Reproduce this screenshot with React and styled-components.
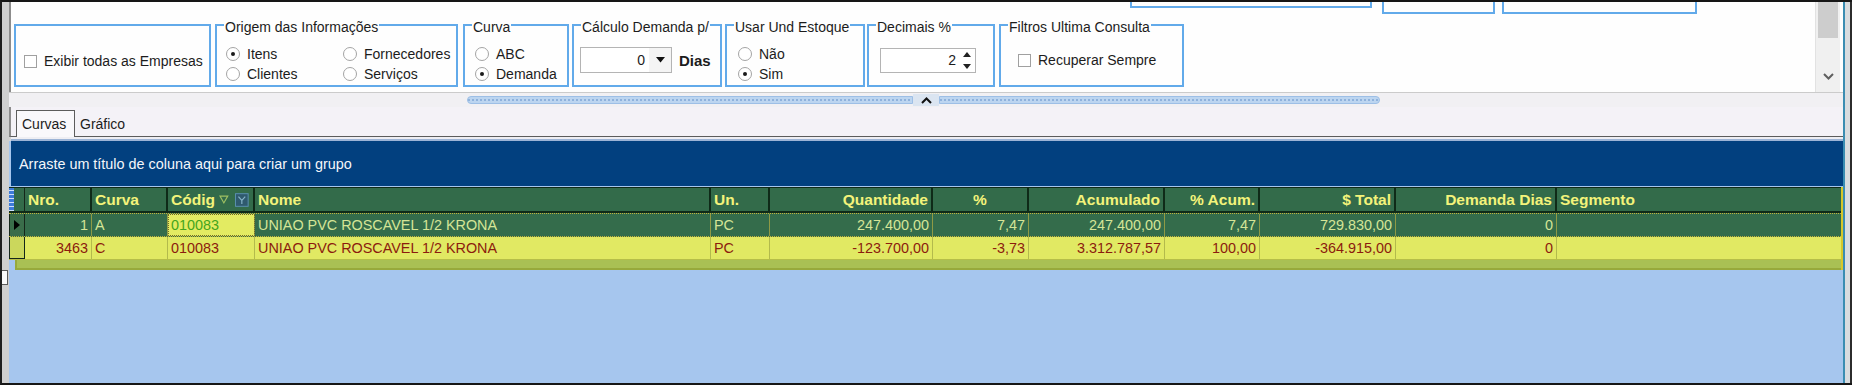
import React from 'react'
import styled, { createGlobalStyle } from 'styled-components'

const GlobalStyle = createGlobalStyle`
  html, body {
    margin: 0;
    padding: 0;
    background: #ffffff;
  }
  body {
    font-family: "Liberation Sans", Arial, sans-serif;
    font-size: 14px;
    color: #1a1a1a;
  }
`

const columns = [
  { key: 'nro', title: 'Nro.', w: 67, head: 'left', align: 'right' },
  { key: 'curva', title: 'Curva', w: 76, head: 'left', align: 'left' },
  { key: 'cod', title: 'Códig', w: 87, head: 'left', align: 'left', filter: true },
  { key: 'nome', title: 'Nome', w: 456, head: 'left', align: 'left' },
  { key: 'un', title: 'Un.', w: 59, head: 'left', align: 'left' },
  { key: 'qtd', title: 'Quantidade', w: 163, head: 'right', align: 'right' },
  { key: 'pct', title: '%', w: 96, head: 'center', align: 'right' },
  { key: 'acum', title: 'Acumulado', w: 136, head: 'right', align: 'right' },
  { key: 'pacum', title: '% Acum.', w: 95, head: 'right', align: 'right' },
  { key: 'total', title: '$ Total', w: 136, head: 'right', align: 'right' },
  { key: 'dem', title: 'Demanda Dias', w: 161, head: 'right', align: 'right' },
  { key: 'seg', title: 'Segmento', w: 0, head: 'left', align: 'left' },
]

const rows = [
  {
    nro: '1', curva: 'A', cod: '010083', nome: 'UNIAO PVC ROSCAVEL 1/2 KRONA', un: 'PC',
    qtd: '247.400,00', pct: '7,47', acum: '247.400,00', pacum: '7,47', total: '729.830,00', dem: '0', seg: '',
  },
  {
    nro: '3463', curva: 'C', cod: '010083', nome: 'UNIAO PVC ROSCAVEL 1/2 KRONA', un: 'PC',
    qtd: '-123.700,00', pct: '-3,73', acum: '3.312.787,57', pacum: '100,00', total: '-364.915,00', dem: '0', seg: '',
  },
]

function Radio({ checked, label }) {
  return (
    <Option>
      <RadioDot $checked={checked} />
      <span>{label}</span>
    </Option>
  )
}

function Check({ label }) {
  return (
    <Option>
      <CheckSquare />
      <span>{label}</span>
    </Option>
  )
}

function FilterIcons() {
  return (
    <svg width="32" height="16" viewBox="0 0 32 16">
      <path d="M1 4 L9 4 L5 11 Z" fill="none" stroke="#9fc063" strokeWidth="1.2" />
      <rect x="17" y="1.5" width="13" height="13" fill="#2f5a6e" stroke="#5a8fb0" strokeWidth="1" />
      <path d="M20 4.5 L23.5 8.5 L27 4.5 M23.5 8.5 L23.5 12" fill="none" stroke="#86b4c8" strokeWidth="1.2" />
    </svg>
  )
}

export default function App() {
  return (
    <>
      <GlobalStyle />
      <Frame>
        <LeftRail>
          <RailHandle />
        </LeftRail>
        <Main>
          <TopPanel>
            <PanelContent>
              <PeekRow>
                <PeekBox $w={242} $h={6} $ml={1116} />
                <PeekBox $w={113} $h={12} $ml={10} />
                <PeekBox $w={195} $h={12} $ml={7} />
              </PeekRow>
              <BoxRow>
                <GroupBox $w={197} $ml={0}>
                  <Body $pt={11} $pl={8}>
                    <Check label="Exibir todas as Empresas" />
                  </Body>
                </GroupBox>
                <GroupBox $w={243} $ml={4}>
                  <Legend>Origem das Informações</Legend>
                  <Body $pt={8} $pl={9}>
                    <OptionGrid $cols="117px 1fr">
                      <Radio checked label="Itens" />
                      <Radio label="Fornecedores" />
                      <Radio label="Clientes" />
                      <Radio label="Serviços" />
                    </OptionGrid>
                  </Body>
                </GroupBox>
                <GroupBox $w={106} $ml={5}>
                  <Legend>Curva</Legend>
                  <Body $pt={8} $pl={10}>
                    <OptionGrid $cols="1fr">
                      <Radio label="ABC" />
                      <Radio checked label="Demanda" />
                    </OptionGrid>
                  </Body>
                </GroupBox>
                <GroupBox $w={150} $ml={3}>
                  <Legend>Cálculo Demanda p/</Legend>
                  <Body $pt={0} $pl={6}>
                    <InlineRow>
                      <Combo>
                        <ComboValue>0</ComboValue>
                        <ComboArrow>
                          <svg width="9" height="6" viewBox="0 0 9 6">
                            <path d="M0 0 L9 0 L4.5 5.5 Z" fill="#111" />
                          </svg>
                        </ComboArrow>
                      </Combo>
                      <BoldLabel>Dias</BoldLabel>
                    </InlineRow>
                  </Body>
                </GroupBox>
                <GroupBox $w={140} $ml={3}>
                  <Legend>Usar Und Estoque</Legend>
                  <Body $pt={8} $pl={11}>
                    <OptionGrid $cols="1fr">
                      <Radio label="Não" />
                      <Radio checked label="Sim" />
                    </OptionGrid>
                  </Body>
                </GroupBox>
                <GroupBox $w={128} $ml={2}>
                  <Legend>Decimais %</Legend>
                  <Body $pt={0} $pl={11}>
                    <Spin>
                      <ComboValue>2</ComboValue>
                      <SpinArrows>
                        <svg width="8" height="5" viewBox="0 0 8 5">
                          <path d="M0 5 L8 5 L4 0 Z" fill="#222" />
                        </svg>
                        <svg width="8" height="5" viewBox="0 0 8 5">
                          <path d="M0 0 L8 0 L4 5 Z" fill="#222" />
                        </svg>
                      </SpinArrows>
                    </Spin>
                  </Body>
                </GroupBox>
                <GroupBox $w={185} $ml={4}>
                  <Legend>Filtros Ultima Consulta</Legend>
                  <Body $pt={0} $pl={17}>
                    <Check label="Recuperar Sempre" />
                  </Body>
                </GroupBox>
              </BoxRow>
            </PanelContent>
            <ScrollBar>
              <Thumb />
              <ScrollArrow>
                <svg width="11" height="7" viewBox="0 0 11 7">
                  <path d="M1 1 L5.5 5.5 L10 1" fill="none" stroke="#5f5f5f" strokeWidth="2" />
                </svg>
              </ScrollArrow>
            </ScrollBar>
          </TopPanel>

          <Splitter>
            <Grip $side="left" $w={446} />
            <GripButton>
              <svg width="11" height="7" viewBox="0 0 11 7">
                <path d="M1 6 L5.5 1.5 L10 6" fill="none" stroke="#111" strokeWidth="2" />
              </svg>
            </GripButton>
            <Grip $side="right" $w={441} />
          </Splitter>

          <TabStrip>
            <Tab $active>Curvas</Tab>
            <Tab>Gráfico</Tab>
          </TabStrip>
          <TabEdge />

          <Page>
            <GroupBar>Arraste um título de coluna aqui para criar um grupo</GroupBar>
            <Grid>
              <HeaderRow>
                <Indicator $kind="head">
                  <IndicatorStripe />
                </Indicator>
                {columns.map(c => (
                  <HeadCell key={c.key} $w={c.w} $align={c.head}>
                    <span>{c.title}</span>
                    {c.filter && <FilterIcons />}
                  </HeadCell>
                ))}
              </HeaderRow>
              {rows.map((r, i) => (
                <DataRow key={i} $current={i === 0}>
                  <Indicator $kind={i === 0 ? 'current' : 'row'}>
                    {i === 0 && (
                      <svg width="6" height="10" viewBox="0 0 6 10">
                        <path d="M0 0 L6 5 L0 10 Z" fill="#000" />
                      </svg>
                    )}
                  </Indicator>
                  {columns.map(c => (
                    <Cell
                      key={c.key}
                      $w={c.w}
                      $align={c.align}
                      $current={i === 0}
                      $focused={i === 0 && c.key === 'cod'}
                    >
                      {r[c.key]}
                    </Cell>
                  ))}
                </DataRow>
              ))}
              <GridFooter />
            </Grid>
          </Page>
        </Main>
        <RightRail />
      </Frame>
    </>
  )
}

const Frame = styled.div`
  width: 1852px;
  height: 385px;
  box-sizing: border-box;
  border-top: 2px solid #161616;
  border-bottom: 2px solid #161616;
  border-left: 2px solid #1e1e1e;
  display: flex;
  overflow: hidden;
  background: #d4d4d4;
`
const LeftRail = styled.div`
  width: 7px;
  flex-shrink: 0;
  background: #cfcfcf;
  display: flex;
  flex-direction: column;
`
const RailHandle = styled.div`
  margin-top: 268px;
  width: 5px;
  height: 13px;
  background: #fafafa;
  border: 1px solid #5a5a5a;
  border-left: none;
`
const RightRail = styled.div`
  width: 9px;
  flex-shrink: 0;
  background: linear-gradient(to right, #3a8db2 0 2px, #d8dcdf 2px 7px, #2c2c2c 7px 9px);
`
const Main = styled.div`
  width: 1834px;
  flex-shrink: 0;
  display: flex;
  flex-direction: column;
  min-width: 0;
`
const TopPanel = styled.div`
  height: 90px;
  flex-shrink: 0;
  display: flex;
  background: #fefefe;
  border-left: 2px solid #8c8c8c;
`
const PanelContent = styled.div`
  flex: 1;
  display: flex;
  flex-direction: column;
  padding-left: 3px;
  overflow: hidden;
`
const PeekRow = styled.div`
  display: flex;
  align-items: flex-start;
  height: 12px;
`
const PeekBox = styled.div`
  width: ${({ $w }) => $w}px;
  height: ${({ $h }) => $h}px;
  margin-left: ${({ $ml }) => $ml}px;
  box-sizing: border-box;
  border: 2px solid #62aaea;
  border-top: none;
  flex-shrink: 0;
`
const BoxRow = styled.div`
  display: flex;
  align-items: flex-start;
  margin-top: 10px;
`
const GroupBox = styled.div`
  width: ${({ $w }) => $w}px;
  margin-left: ${({ $ml }) => $ml}px;
  height: 63px;
  box-sizing: border-box;
  border: 2px solid #62aaea;
  display: flex;
  flex-direction: column;
  flex-shrink: 0;
`
const Legend = styled.div`
  align-self: flex-start;
  margin: -7px 0 0 7px;
  padding: 0 1px;
  height: 16px;
  line-height: 16px;
  background: #fefefe;
  color: #1c1c1c;
  white-space: nowrap;
`
const Body = styled.div`
  flex: 1;
  display: flex;
  flex-direction: column;
  justify-content: center;
  padding-top: ${({ $pt }) => $pt}px;
  padding-left: ${({ $pl }) => $pl}px;
`
const OptionGrid = styled.div`
  display: grid;
  grid-template-columns: ${({ $cols }) => $cols};
  grid-auto-rows: 20px;
`
const Option = styled.label`
  display: flex;
  align-items: center;
  gap: 7px;
  white-space: nowrap;
  color: #1c1c1c;
  line-height: 16px;
`
const RadioDot = styled.span`
  width: 14px;
  height: 14px;
  box-sizing: border-box;
  border: 1px solid #a4a4a4;
  border-radius: 50%;
  background: #fff;
  display: flex;
  align-items: center;
  justify-content: center;
  flex-shrink: 0;
  &::after {
    content: '';
    width: 4px;
    height: 4px;
    border-radius: 50%;
    background: ${({ $checked }) => ($checked ? '#1a1a1a' : 'transparent')};
  }
`
const CheckSquare = styled.span`
  width: 13px;
  height: 13px;
  box-sizing: border-box;
  border: 1px solid #a0a0a0;
  background: #fff;
  flex-shrink: 0;
`
const InlineRow = styled.div`
  display: flex;
  align-items: center;
  gap: 7px;
`
const Combo = styled.div`
  width: 92px;
  height: 26px;
  box-sizing: border-box;
  border: 1px solid #b4b4b4;
  background: #fff;
  display: flex;
  align-items: center;
`
const ComboValue = styled.span`
  flex: 1;
  text-align: right;
  padding-right: 4px;
  color: #1c1c1c;
`
const ComboArrow = styled.span`
  width: 22px;
  height: 24px;
  background: #f4f4f4;
  display: flex;
  align-items: center;
  justify-content: center;
`
const BoldLabel = styled.span`
  font-weight: bold;
  font-size: 15px;
  color: #1c1c1c;
`
const Spin = styled(Combo)`
  width: 96px;
  height: 25px;
`
const SpinArrows = styled.span`
  width: 14px;
  height: 23px;
  display: flex;
  flex-direction: column;
  align-items: center;
  justify-content: space-between;
  padding: 3px 0;
  box-sizing: border-box;
  margin-right: 1px;
`
const ScrollBar = styled.div`
  width: 25px;
  margin-right: 3px;
  flex-shrink: 0;
  background: #f0f0f0;
  border-left: 1px solid #e2e2e2;
  box-sizing: border-box;
  display: flex;
  flex-direction: column;
  align-items: center;
`
const Thumb = styled.div`
  width: 20px;
  height: 36px;
  background: #cdcdcd;
`
const ScrollArrow = styled.div`
  margin-top: auto;
  height: 20px;
  margin-bottom: 6px;
  display: flex;
  align-items: center;
`
const Splitter = styled.div`
  height: 15px;
  flex-shrink: 0;
  box-sizing: border-box;
  border-top: 1px solid #cbcbcb;
  background: #f1f0f3;
  display: flex;
  align-items: center;
  padding-left: 458px;
`
const Grip = styled.div`
  width: ${({ $w }) => $w}px;
  height: 8px;
  box-sizing: border-box;
  border: 1px solid #9dbfe6;
  border-radius: ${({ $side }) => ($side === 'left' ? '4px 0 0 4px' : '0 4px 4px 0')};
  background:
    repeating-linear-gradient(to right, #8fb2dc 0 2px, transparent 2px 4px) center / 100% 2px no-repeat,
    #bcd5f0;
`
const GripButton = styled.div`
  width: 26px;
  height: 12px;
  background: #dbe5f1;
  display: flex;
  align-items: center;
  justify-content: center;
`
const TabStrip = styled.div`
  height: 30px;
  flex-shrink: 0;
  box-sizing: border-box;
  background: #f4f2f7;
  border-left: 2px solid #8c8c8c;
  border-bottom: 1px solid #5c5c5c;
  display: flex;
  align-items: flex-end;
  padding-left: 5px;
`
const Tab = styled.div`
  height: ${({ $active }) => ($active ? '27px' : '24px')};
  box-sizing: border-box;
  padding: 0 5px;
  display: flex;
  align-items: center;
  color: #1c1c1c;
  ${({ $active }) => $active && `
    width: 59px;
    background: #f9f8fb;
    border: 1px solid #5c5c5c;
    border-bottom: none;
    margin-bottom: -1px;
  `}
`
const TabEdge = styled.div`
  height: 4px;
  flex-shrink: 0;
  margin-left: 2px;
  background: linear-gradient(to bottom, #eeeef3 0 2px, #9db4d6 2px 4px);
`
const Page = styled.div`
  flex: 1;
  background: #a6c6ee;
  display: flex;
  flex-direction: column;
`
const GroupBar = styled.div`
  height: 45px;
  margin-left: 2px;
  flex-shrink: 0;
  background: #02407f;
  color: #f4f6fa;
  font-size: 14.4px;
  display: flex;
  align-items: center;
  padding-left: 8px;
`
const Grid = styled.div`
  display: flex;
  flex-direction: column;
  margin-top: 1px;
  border-right: 2px solid #d6c82a;
`
const HeaderRow = styled.div`
  display: flex;
  height: 26px;
  box-sizing: border-box;
  background: #336b4a;
  border-top: 1px solid #0f2a18;
  border-bottom: 2px solid #0f2a18;
`
const HeadCell = styled.div`
  ${({ $w }) => ($w ? `width: ${$w}px; flex-shrink: 0;` : 'flex: 1;')}
  box-sizing: border-box;
  border-right: 2px solid #0f2a18;
  padding: 0 3px;
  display: flex;
  align-items: center;
  gap: 4px;
  justify-content: ${({ $align }) => ($align === 'right' ? 'flex-end' : $align === 'center' ? 'center' : 'flex-start')};
  color: #f3f37a;
  font-weight: bold;
  font-size: 15.5px;
  white-space: nowrap;
  overflow: hidden;
  &:last-child {
    border-right: none;
  }
`
const DataRow = styled.div`
  display: flex;
  height: ${({ $current }) => ($current ? '24px' : '23px')};
  box-sizing: border-box;
  background: ${({ $current }) => ($current ? '#346c4b' : '#e1e963')};
  border-bottom: 1px ${({ $current }) => ($current ? 'dotted #c4b43a' : 'solid #b6be48')};
  ${({ $current }) => $current && 'border-top: 1px dotted #c4b43a;'}
`
const Indicator = styled.div`
  width: 16px;
  flex-shrink: 0;
  box-sizing: border-box;
  border-right: 1px solid #15261a;
  border-left: 1px solid #15261a;
  display: flex;
  align-items: center;
  justify-content: center;
  background: ${({ $kind }) => ($kind === 'head' ? '#336b4a' : $kind === 'current' ? '#3a6d4a' : '#cbd75c')};
  ${({ $kind }) => $kind === 'head' && 'justify-content: flex-start; border-left: none;'}
  ${({ $kind }) => $kind === 'row' && 'border-bottom: 1px solid #15261a;'}
`
const IndicatorStripe = styled.span`
  width: 5px;
  height: 100%;
  background:
    repeating-linear-gradient(to bottom, #3d7bd9 0 2px, #cfe0ff 2px 3px, #3d7bd9 3px 4px),
    #3d7bd9;
`
const Cell = styled.div`
  ${({ $w }) => ($w ? `width: ${$w}px; flex-shrink: 0;` : 'flex: 1;')}
  box-sizing: border-box;
  border-right: 1px solid ${({ $current }) => ($current ? '#8f9a45' : '#b3ba4c')};
  padding: 0 3px;
  display: flex;
  align-items: center;
  justify-content: ${({ $align }) => ($align === 'right' ? 'flex-end' : 'flex-start')};
  font-size: 14.4px;
  white-space: nowrap;
  color: ${({ $current }) => ($current ? '#d5e597' : '#8c1b0e')};
  ${({ $focused }) => $focused && `
    background: #e3eb62;
    color: #44a51c;
    outline: 1px dotted #6f6a2a;
    outline-offset: -1px;
  `}
  &:last-child {
    border-right: none;
  }
`
const GridFooter = styled.div`
  height: 10px;
  margin-left: 6px;
  box-sizing: border-box;
  background: #a9c054;
  border-left: 2px solid #97a93c;
  border-bottom: 2px solid #97a93c;
`
